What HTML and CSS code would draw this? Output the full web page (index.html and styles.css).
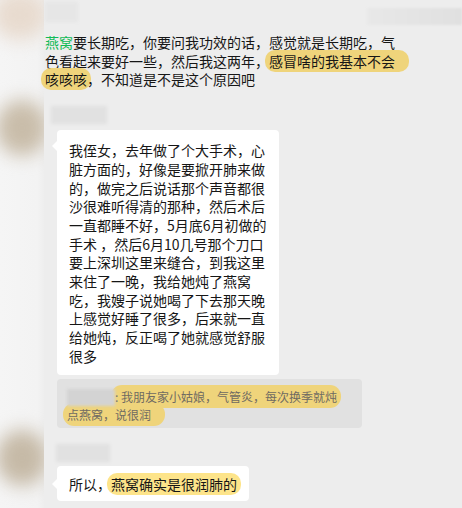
FILE: index.html
```html
<!DOCTYPE html>
<html lang="zh-CN">
<head>
<meta charset="utf-8">
<title>聊天记录</title>
<link rel="stylesheet" href="styles.css">
</head>
<body>
<div class="screen">
  <aside class="strip">
    <div class="av av1"></div>
    <div class="av av2"></div>
    <div class="av av3"></div>
  </aside>
  <main class="chat">
    <div class="top">
      <div class="blurname n0"></div>
      <div class="topbar"></div>
    </div>
    <p class="plain"><span class="green">燕窝</span>要长期吃，你要问我功效的话，感觉就是长期吃，气<br>色看起来要好一些，然后我这两年，<span class="hl hl-wide">感冒啥的我基本不会</span><br><span class="hl">咳咳咳</span>，不知道是不是这个原因吧</p>
    <div class="blurname n1"></div>
    <div class="bubble b1">我侄女，去年做了个大手术，心<br>脏方面的，好像是要掀开肺来做<br>的，做完之后说话那个声音都很<br>沙很难听得清的那种，然后术后<br>一直都睡不好，5月底6月初做的<br>手术 ，然后6月10几号那个刀口<br>要上深圳这里来缝合，到我这里<br>来住了一晚，我给她炖了燕窝<br>吃，我嫂子说她喝了下去那天晚<br>上感觉好睡了很多，后来就一直<br>给她炖，反正喝了她就感觉舒服<br>很多</div>
    <div class="quote"><span class="qname"></span><span class="hl">: 我朋友家小姑娘，气管炎，每次换季就炖</span><br><span class="hl hl-wide">点燕窝，说很润</span></div>
    <div class="blurname n2"></div>
    <div class="bubble b2">所以，<span class="hl hl-light">燕窝确实是很润肺的</span></div>
  </main>
</div>
</body>
</html>
```

FILE: styles.css
```css
html, body {
  margin: 0;
  padding: 0;
}
body {
  background: #ededed;
  font-family: "Noto Sans CJK SC", "Noto Sans", sans-serif;
  color: #161616;
  width: 462px;
  height: 508px;
  overflow: hidden;
}
.screen {
  display: flex;
  height: 508px;
}
.strip {
  width: 44px;
  flex: none;
  background: linear-gradient(90deg, #f5f5f5 0%, #f3f3f3 85%, #eeeeee 100%);
  overflow: hidden;
  display: flex;
  flex-direction: column;
}
.av {
  border-radius: 50%;
  filter: blur(9px);
  flex: none;
}
.av1 {
  width: 56px;
  height: 50px;
  margin: -10px 0 0 -8px;
  background: #e8dbcf;
}
.av2 {
  width: 52px;
  height: 56px;
  margin: 60px 0 0 -4px;
  background: #c9bdaa;
}
.av3 {
  width: 52px;
  height: 56px;
  margin: 274px 0 0 -4px;
  background: #c6baa7;
}
.chat {
  flex: 1;
  display: flex;
  flex-direction: column;
  align-items: flex-start;
  padding-left: 1px;
}
.top {
  height: 33px;
  width: 100%;
  display: flex;
  justify-content: space-between;
  align-items: flex-start;
}
.blurname {
  background: #e1e1e1;
  filter: blur(1.5px);
  flex: none;
}
.n0 {
  width: 33px;
  height: 20px;
  margin-top: 2px;
  background: #e6e6e6;
}
.topbar {
  width: 95px;
  height: 17px;
  margin-top: 8px;
  background: linear-gradient(90deg, #e8e8e8, #e0e0e0);
  filter: blur(1px);
}
.plain {
  margin: 0;
  font-size: 14px;
  line-height: 18.7px;
  white-space: nowrap;
}
.green {
  color: #12bb57;
}
.hl {
  background: #efd47b;
  border-radius: 10px;
  padding: 1px 4px;
  margin: 0 -4px;
  -webkit-box-decoration-break: clone;
  box-decoration-break: clone;
}
.hl.hl-wide {
  padding-right: 14px;
  margin-right: -14px;
}
.hl-light {
  background: #fde48a;
}
.n1 {
  width: 56px;
  height: 18px;
  margin: 17px 0 0 6px;
}
.bubble {
  position: relative;
  background: #ffffff;
  border-radius: 4px;
  margin-left: 12px;
  font-size: 14px;
  line-height: 18.7px;
  white-space: nowrap;
  color: #161616;
}
.bubble::before {
  content: "";
  position: absolute;
  left: -5px;
  width: 0;
  height: 0;
  border-top: 5px solid transparent;
  border-bottom: 5px solid transparent;
  border-right: 5px solid #ffffff;
}
.b1 {
  margin-top: 6px;
  width: 196px;
  padding: 11px 14px 9px 12px;
}
.b1::before {
  top: 11px;
}
.b2 {
  margin-top: 4px;
  padding: 9px 12px 8px 12px;
}
.b2::before {
  top: 13px;
}
.quote {
  margin: 4px 0 0 12px;
  width: 285px;
  padding: 9px 10px 5px 10px;
  background: #e1e1e1;
  border-radius: 4px;
  font-size: 12px;
  line-height: 17px;
  color: #6f6b62;
  white-space: nowrap;
}
.quote .hl {
  padding-top: 3px;
  padding-bottom: 3px;
  border-radius: 11px;
}
.qname {
  display: inline-block;
  width: 48px;
  height: 17px;
  vertical-align: -4px;
  background: #d3d3d3;
  filter: blur(1.5px);
}
.n2 {
  width: 54px;
  height: 18px;
  margin: 16px 0 0 11px;
}
```
